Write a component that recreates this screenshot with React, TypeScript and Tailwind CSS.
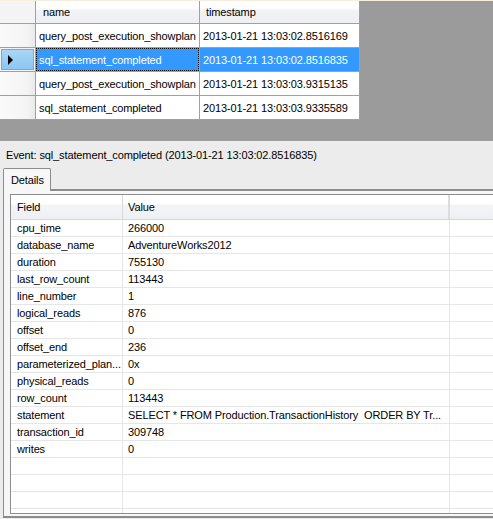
import React from "react";

const topRows: [string, string][] = [
  ["query_post_execution_showplan", "2013-01-21 13:03:02.8516169"],
  ["sql_statement_completed", "2013-01-21 13:03:02.8516835"],
  ["query_post_execution_showplan", "2013-01-21 13:03:03.9315135"],
  ["sql_statement_completed", "2013-01-21 13:03:03.9335589"],
];

const fields: [string, string][] = [
  ["cpu_time", "266000"],
  ["database_name", "AdventureWorks2012"],
  ["duration", "755130"],
  ["last_row_count", "113443"],
  ["line_number", "1"],
  ["logical_reads", "876"],
  ["offset", "0"],
  ["offset_end", "236"],
  ["parameterized_plan...", "0x"],
  ["physical_reads", "0"],
  ["row_count", "113443"],
  ["statement", "SELECT * FROM Production.TransactionHistory  ORDER BY Tr..."],
  ["transaction_id", "309748"],
  ["writes", "0"],
  ["", ""],
  ["", ""],
  ["", ""],
  ["", ""],
];

export default function App() {
  return (
    <div className="w-[493px] h-[519px] overflow-hidden bg-[#ececec] text-[11px] leading-[13px] tracking-[-0.12px] text-black font-['Liberation_Sans',Arial,sans-serif]">
      {/* Top event list */}
      <div className="h-[141px] bg-[#9b9b9b] border-t border-[#f3f1de]">
        <div className="w-[360px] flex flex-col bg-white">
          <div className="flex h-[23px]">
            <div className="w-[36px] shrink-0 border-r border-b border-[#a0a0a0] bg-[#f4f4f4]" />
            <div className="w-[164px] shrink-0 border-r border-b border-[#a0a0a0] bg-[linear-gradient(to_bottom,#ffffff_0%,#ffffff_30%,#f2f3f5_45%,#eeeff2_100%)] flex items-center pl-[7px] pt-[1px]">
              name
            </div>
            <div className="w-[160px] shrink-0 border-r border-b border-[#a0a0a0] bg-[linear-gradient(to_bottom,#ffffff_0%,#ffffff_30%,#f2f3f5_45%,#eeeff2_100%)] flex items-center pl-[6px] pt-[1px]">
              timestamp
            </div>
          </div>
          {topRows.map(([n, t], i) => {
            const sel = i === 1;
            return (
              <div key={i} className="flex h-[24px]">
                <div
                  className={
                    sel
                      ? "w-[36px] shrink-0 border-r border-b border-[#a0a0a0] bg-[#f4f4f4] p-[1px]"
                      : "w-[36px] shrink-0 border-r border-b border-[#a0a0a0] bg-[linear-gradient(to_right,#fafafa_0%,#f4f4f4_80%,#e9e9e9_100%)]"
                  }
                >
                  {sel && (
                    <div className="h-full w-full bg-[linear-gradient(to_bottom,#a9d6f7_0%,#8cc6f2_100%)] border border-[#69ade3] flex items-center pl-[6px]">
                      <div className="w-0 h-0 border-y-[5px] border-y-transparent border-l-[5px] border-l-black" />
                    </div>
                  )}
                </div>
                <div
                  className={
                    sel
                      ? "relative w-[164px] shrink-0 border-r border-b border-[#a0a0a0] bg-[#3399ff] text-white flex items-center pl-[3px] pt-[1px]"
                      : "w-[164px] shrink-0 border-r border-b border-[#a0a0a0] flex items-center pl-[3px] pt-[1px]"
                  }
                >
                  {sel && <div className="absolute inset-0 border border-dotted border-black" />}
                  <span className="relative">{n}</span>
                </div>
                <div
                  className={
                    sel
                      ? "w-[160px] shrink-0 border-r border-b border-[#a0a0a0] bg-[#3399ff] text-white flex items-center pl-[3px] pt-[1px]"
                      : "w-[160px] shrink-0 border-r border-b border-[#a0a0a0] flex items-center pl-[3px] pt-[1px]"
                  }
                >
                  {t}
                </div>
              </div>
            );
          })}
        </div>
      </div>

      {/* Event label */}
      <div className="pt-[8px] pl-[6px] h-[21px] whitespace-nowrap">
        Event: sql_statement_completed (2013-01-21 13:03:02.8516835)
      </div>

      {/* Tabs */}
      <div className="mt-[6px] ml-[3px] flex flex-col">
        <div className="flex h-[21px]">
          <div className="relative z-10 w-[48px] h-[23px] border border-b-0 border-[#8c8c8c] rounded-t-[2px] bg-[#f7f7f7] pl-[7px] pt-[5px]">
            Details
          </div>
        </div>
        <div className="border-t-2 border-l border-b-2 border-[#8c8c8c] bg-[#f7f7f7] pt-[3px] pb-[2px] pl-[6px]">
          <div className="h-[320px] border-t border-l border-b border-[#8c8c8c] bg-white flex flex-col overflow-hidden">
            <div className="flex h-[25px] shrink-0 border-b border-[#d5d5d5] bg-[linear-gradient(to_bottom,#ffffff_0%,#ffffff_35%,#f3f4f7_45%,#eff0f4_100%)]">
              <div className="w-[112px] shrink-0 border-r border-[#d8d8d8] flex items-center pl-[6px] pt-[1px]">Field</div>
              <div className="w-[327px] shrink-0 border-r-2 border-[#dcdcdc] flex items-center pl-[5px] pt-[1px]">Value</div>
              <div className="flex-1" />
            </div>
            <div className="flex-1 overflow-hidden">
              {fields.map(([f, v], i) => (
                <div key={i} className="flex h-[17px] border-b border-[#e6e6e6]">
                  <div className="w-[112px] shrink-0 border-r border-[#e6e6e6] flex items-center pl-[6px] pt-[1px] whitespace-nowrap">
                    {f}
                  </div>
                  <div className="w-[327px] shrink-0 border-r border-[#e6e6e6] flex items-center pl-[5px] pt-[1px] whitespace-pre overflow-hidden">
                    {v}
                  </div>
                  <div className="flex-1" />
                </div>
              ))}
            </div>
          </div>
        </div>
      </div>
    </div>
  );
}
